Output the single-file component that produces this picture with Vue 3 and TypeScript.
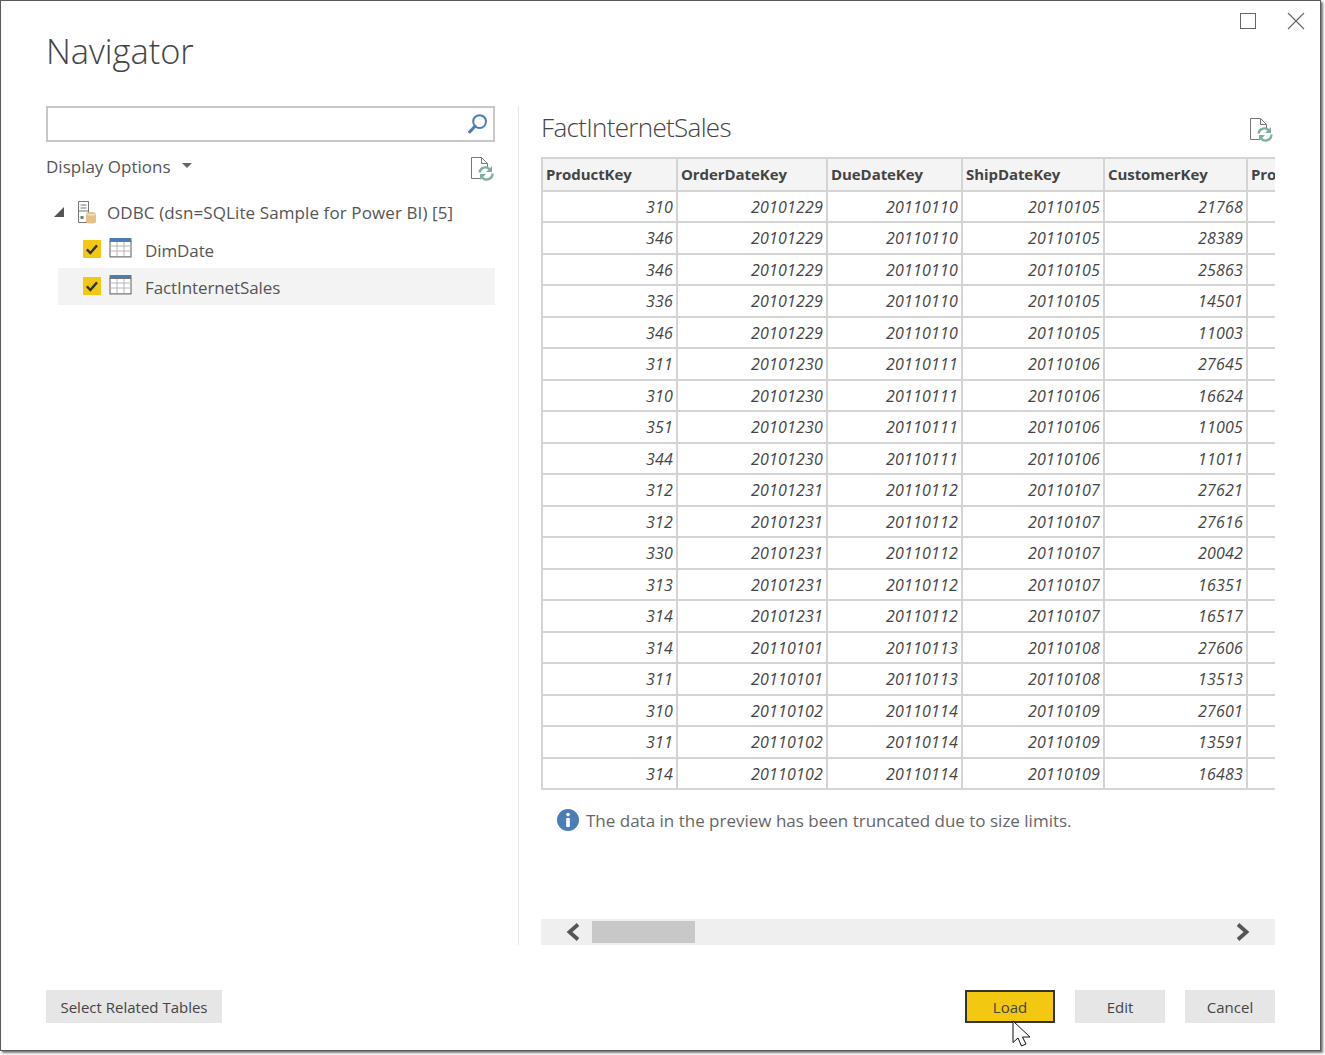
<script setup lang="ts">
const columns: string[] = ['ProductKey', 'OrderDateKey', 'DueDateKey', 'ShipDateKey', 'CustomerKey', 'Pro']
const rows: string[][] = [
  ['310', '20101229', '20110110', '20110105', '21768'],
  ['346', '20101229', '20110110', '20110105', '28389'],
  ['346', '20101229', '20110110', '20110105', '25863'],
  ['336', '20101229', '20110110', '20110105', '14501'],
  ['346', '20101229', '20110110', '20110105', '11003'],
  ['311', '20101230', '20110111', '20110106', '27645'],
  ['310', '20101230', '20110111', '20110106', '16624'],
  ['351', '20101230', '20110111', '20110106', '11005'],
  ['344', '20101230', '20110111', '20110106', '11011'],
  ['312', '20101231', '20110112', '20110107', '27621'],
  ['312', '20101231', '20110112', '20110107', '27616'],
  ['330', '20101231', '20110112', '20110107', '20042'],
  ['313', '20101231', '20110112', '20110107', '16351'],
  ['314', '20101231', '20110112', '20110107', '16517'],
  ['314', '20110101', '20110113', '20110108', '27606'],
  ['311', '20110101', '20110113', '20110108', '13513'],
  ['310', '20110102', '20110114', '20110109', '27601'],
  ['311', '20110102', '20110114', '20110109', '13591'],
  ['314', '20110102', '20110114', '20110109', '16483'],
]
const tables: { name: string; selected: boolean }[] = [
  { name: 'DimDate', selected: false },
  { name: 'FactInternetSales', selected: true },
]
</script>

<template>
  <div class="stage">
    <div class="window">
      <header class="head">
        <h1 class="title">Navigator</h1>
        <div class="controls">
          <svg width="18" height="18" viewBox="0 0 18 18"><rect x="1.5" y="1.5" width="15" height="15" fill="none" stroke="#666" stroke-width="1" /></svg>
          <svg width="18" height="18" viewBox="0 0 18 18"><path d="M1 1L17 17M17 1L1 17" fill="none" stroke="#666" stroke-width="1.1" /></svg>
        </div>
      </header>

      <main class="content">
        <section class="left">
          <div class="search">
            <svg width="22" height="22" viewBox="0 0 22 22"><circle cx="12.6" cy="8.6" r="6.4" fill="none" stroke="#4a7db5" stroke-width="2" /><path d="M8 13.2L2.6 19" fill="none" stroke="#4a7db5" stroke-width="3" stroke-linecap="round" /></svg>
          </div>
          <div class="options">
            <span class="options-label">Display Options</span>
            <span class="caret"></span>
            <span class="spacer"></span>
            <svg class="refresh" width="24" height="25" viewBox="0 0 24 25">
              <path d="M1.5 1.5H11.5L17.5 7.5V12M11.5 1.5V7.5H17.5M11 22.5H1.5V1.5" fill="none" stroke="#777" stroke-width="1" />
              <path d="M9.5 16.5A6 6 0 0 1 20 13.5M22.5 17.5A6 6 0 0 1 12 21.5" fill="none" stroke="#7db09f" stroke-width="2.4" />
              <path d="M22 10V16H16ZM10 24V18H16Z" fill="#7db09f" />
            </svg>
          </div>
          <div class="tree-root">
            <span class="triangle"></span>
            <svg class="server" width="20" height="24" viewBox="0 0 20 24">
              <path d="M1.5 1.5H11.5V22.5H1.5ZM3.5 5H9.5M3.5 8H9.5M1.5 11H11.5" fill="none" stroke="#777" stroke-width="1" />
              <rect x="3.5" y="16" width="3" height="3" fill="#777" />
              <path d="M9 13.5C9 11.5 19 11.5 19 13.5V22C19 24 9 24 9 22Z" fill="#e6c187" />
              <path d="M9 13.5C9 15.5 19 15.5 19 13.5" fill="none" stroke="#fff" stroke-width="0.7" />
            </svg>
            <span>ODBC (dsn=SQLite Sample for Power BI) [5]</span>
          </div>
          <div v-for="t in tables" :key="t.name" class="tree-item" :class="{ selected: t.selected }">
            <span class="check">
              <svg width="18" height="18" viewBox="0 0 18 18"><path d="M3.8 9.4L7.4 13L14 5.4" fill="none" stroke="#333" stroke-width="2.4" /></svg>
            </span>
            <svg class="grid-icon" width="23" height="20" viewBox="0 0 23 20">
              <rect x="0.5" y="0" width="22" height="4" fill="#4a7db5" />
              <path d="M1 3.5H22V18.8H1Z" fill="#fff" stroke="#777" stroke-width="1.2" />
              <path d="M1 8H22M1 13H22M8 4V18M15 4V18" fill="none" stroke="#b5b5b5" stroke-width="1" />
            </svg>
            <span>{{ t.name }}</span>
          </div>
        </section>

        <div class="divider"></div>

        <section class="right">
          <div class="preview-head">
            <h2 class="preview-title">FactInternetSales</h2>
            <svg class="refresh" width="24" height="25" viewBox="0 0 24 25">
              <path d="M1.5 1.5H11.5L17.5 7.5V12M11.5 1.5V7.5H17.5M11 22.5H1.5V1.5" fill="none" stroke="#777" stroke-width="1" />
              <path d="M9.5 16.5A6 6 0 0 1 20 13.5M22.5 17.5A6 6 0 0 1 12 21.5" fill="none" stroke="#7db09f" stroke-width="2.4" />
              <path d="M22 10V16H16ZM10 24V18H16Z" fill="#7db09f" />
            </svg>
          </div>
          <div class="table">
            <div class="row header">
              <div v-for="c in columns" :key="c" class="cell">{{ c }}</div>
            </div>
            <div v-for="(r, i) in rows" :key="i" class="row">
              <div v-for="(v, j) in r" :key="j" class="cell">{{ v }}</div>
              <div class="cell"></div>
            </div>
          </div>
          <div class="notice">
            <svg width="22" height="22" viewBox="0 0 22 22"><circle cx="11" cy="11" r="11" fill="#4a7db5" /><circle cx="11" cy="5.6" r="1.8" fill="#fff" /><rect x="9.2" y="9" width="3.6" height="9" fill="#fff" /></svg>
            <span>The data in the preview has been truncated due to size limits.</span>
          </div>
          <div class="scrollbar">
            <svg class="arrow-left" width="16" height="18" viewBox="0 0 16 18"><path d="M13 1.5L4.5 9L13 16.5" fill="none" stroke="#555" stroke-width="3.8" /></svg>
            <div class="thumb"></div>
            <span class="spacer"></span>
            <svg class="arrow-right" width="16" height="18" viewBox="0 0 16 18"><path d="M3 1.5L11.5 9L3 16.5" fill="none" stroke="#555" stroke-width="3.8" /></svg>
          </div>
        </section>
      </main>

      <footer class="footer">
        <button class="btn related">Select Related Tables</button>
        <span class="spacer"></span>
        <div class="load-wrap">
          <button class="btn primary">Load</button>
          <svg class="cursor" width="20" height="28" viewBox="0 0 20 28"><path d="M1 1V22.5L6 18L9.5 26L14 24L10.5 17H18Z" fill="#fff" stroke="#111" stroke-width="1" /></svg>
        </div>
        <button class="btn">Edit</button>
        <button class="btn">Cancel</button>
      </footer>
    </div>
  </div>
</template>

<style>
html, body { margin: 0; background: #fff; }
</style>

<style scoped>
.stage {
  width: 1325px;
  height: 1055px;
  overflow: hidden;
  font-family: "Open Sans", "Noto Sans", sans-serif;
  color: #555;
  background: #fff;
}
.window {
  box-sizing: border-box;
  width: 1321px;
  height: 1051px;
  border: 1px solid #5a5a5a;
  background: #fff;
  box-shadow: 2px 2px 2px #777;
  display: flex;
  flex-direction: column;
}
.head {
  height: 105px;
  display: flex;
  justify-content: space-between;
  align-items: flex-start;
  padding: 0 15px 0 45px;
  box-sizing: border-box;
}
.title {
  margin: 28px 0 0;
  font-size: 34.4px;
  line-height: 44px;
  font-weight: 300;
  color: #444;
}
.controls {
  display: flex;
  gap: 30px;
  padding-top: 11px;
}
.controls svg { display: block; }
.content {
  display: flex;
  height: 839px;
  padding-left: 45px;
}
.left { width: 449px; }
.divider {
  width: 1px;
  margin: 0 22px 0 23px;
  background: #e6e6e6;
}
.search {
  box-sizing: border-box;
  height: 36px;
  border: 2px solid #c8c8c8;
  display: flex;
  align-items: center;
  justify-content: flex-end;
  padding-right: 4px;
}
.options {
  display: flex;
  align-items: center;
  margin-top: 11px;
  height: 26px;
  font-size: 17px;
  color: #555;
}
.caret {
  margin-left: 11px;
  margin-top: -1px;
  border-left: 5px solid transparent;
  border-right: 5px solid transparent;
  border-top: 5px solid #666;
}
.spacer { flex: 1; }
.refresh { display: block; }
.options .refresh { margin-right: 1px; margin-top: 5px; }
.tree-root {
  display: flex;
  align-items: center;
  margin-top: 20px;
  height: 26px;
  padding-left: 8px;
  font-size: 17px;
  letter-spacing: 0.1px;
  white-space: nowrap;
}
.triangle {
  width: 0;
  height: 0;
  border-left: 10px solid transparent;
  border-bottom: 10px solid #555;
  margin-right: 13px;
}
.server { margin-right: 10px; }
.tree-item {
  display: flex;
  align-items: center;
  box-sizing: border-box;
  height: 37px;
  margin-left: 12px;
  padding-left: 25px;
  padding-top: 2px;
  font-size: 17px;
  letter-spacing: -0.1px;
}
.tree-root + .tree-item { margin-top: 6px; }
.tree-item.selected { background: #f3f3f3; }
.check {
  width: 18px;
  height: 18px;
  background: #f2c811;
  margin-right: 8px;
  margin-top: -3px;
}
.check svg { display: block; }
.grid-icon { margin-right: 13px; margin-top: -5px; }
.right {
  width: 734px;
  display: flex;
  flex-direction: column;
}
.preview-head {
  height: 51px;
  display: flex;
  justify-content: space-between;
  padding-top: 3px;
  box-sizing: border-box;
}
.preview-title {
  margin: 0;
  font-size: 26px;
  line-height: 36px;
  font-weight: 300;
  color: #444;
  letter-spacing: -0.68px;
}
.preview-head .refresh { margin: 8px 2px 0 0; }
.table {
  width: 734px;
  overflow: hidden;
  border-top: 2px solid #d4d4d4;
  border-left: 2px solid #d4d4d4;
  box-sizing: border-box;
}
.row {
  display: grid;
  grid-template-columns: 135px 150px 135px 142px 143px 40px;
  height: 31.5px;
  box-sizing: border-box;
  border-bottom: 2px solid #d4d4d4;
}
.row.header {
  height: 32.5px;
}
.cell {
  box-sizing: border-box;
  border-right: 2px solid #d4d4d4;
  padding-right: 3px;
  text-align: right;
  font-style: italic;
  font-size: 16px;
  line-height: 31px;
  color: #444;
  letter-spacing: 0.2px;
  overflow: hidden;
  white-space: nowrap;
}
.header .cell {
  text-align: left;
  background: #f4f4f4;
  font-style: normal;
  font-weight: 700;
  font-size: 15px;
  padding-left: 3px;
  letter-spacing: -0.07px;
  line-height: 31px;
}
.notice {
  display: flex;
  align-items: center;
  gap: 7px;
  margin: 19px 0 0 16px;
  height: 22px;
  font-size: 17px;
  color: #666;
  white-space: nowrap;
}
.notice svg { flex: none; }
.scrollbar {
  margin-top: 88px;
  height: 26px;
  background: #efefef;
  display: flex;
  align-items: center;
  padding: 0 24px;
  box-sizing: content-box;
}
.arrow-left { flex: none; margin-right: 11px; }
.arrow-right { flex: none; margin-left: 0; }
.thumb {
  width: 103px;
  height: 22px;
  background: #c8c8c8;
}
.footer {
  display: flex;
  align-items: flex-start;
  gap: 20px;
  padding: 45px 45px 0;
}
.btn {
  box-sizing: border-box;
  width: 90px;
  height: 33px;
  border: none;
  padding: 0;
  margin: 0;
  background: #e6e6e6;
  color: #444;
  font: inherit;
  font-size: 15px;
  display: block;
}
.related { width: 176px; }
.primary {
  background: #f2c811;
  border: 2px solid #333;
}
.load-wrap { position: relative; }
.cursor {
  position: absolute;
  left: 47px;
  top: 30px;
}
</style>
